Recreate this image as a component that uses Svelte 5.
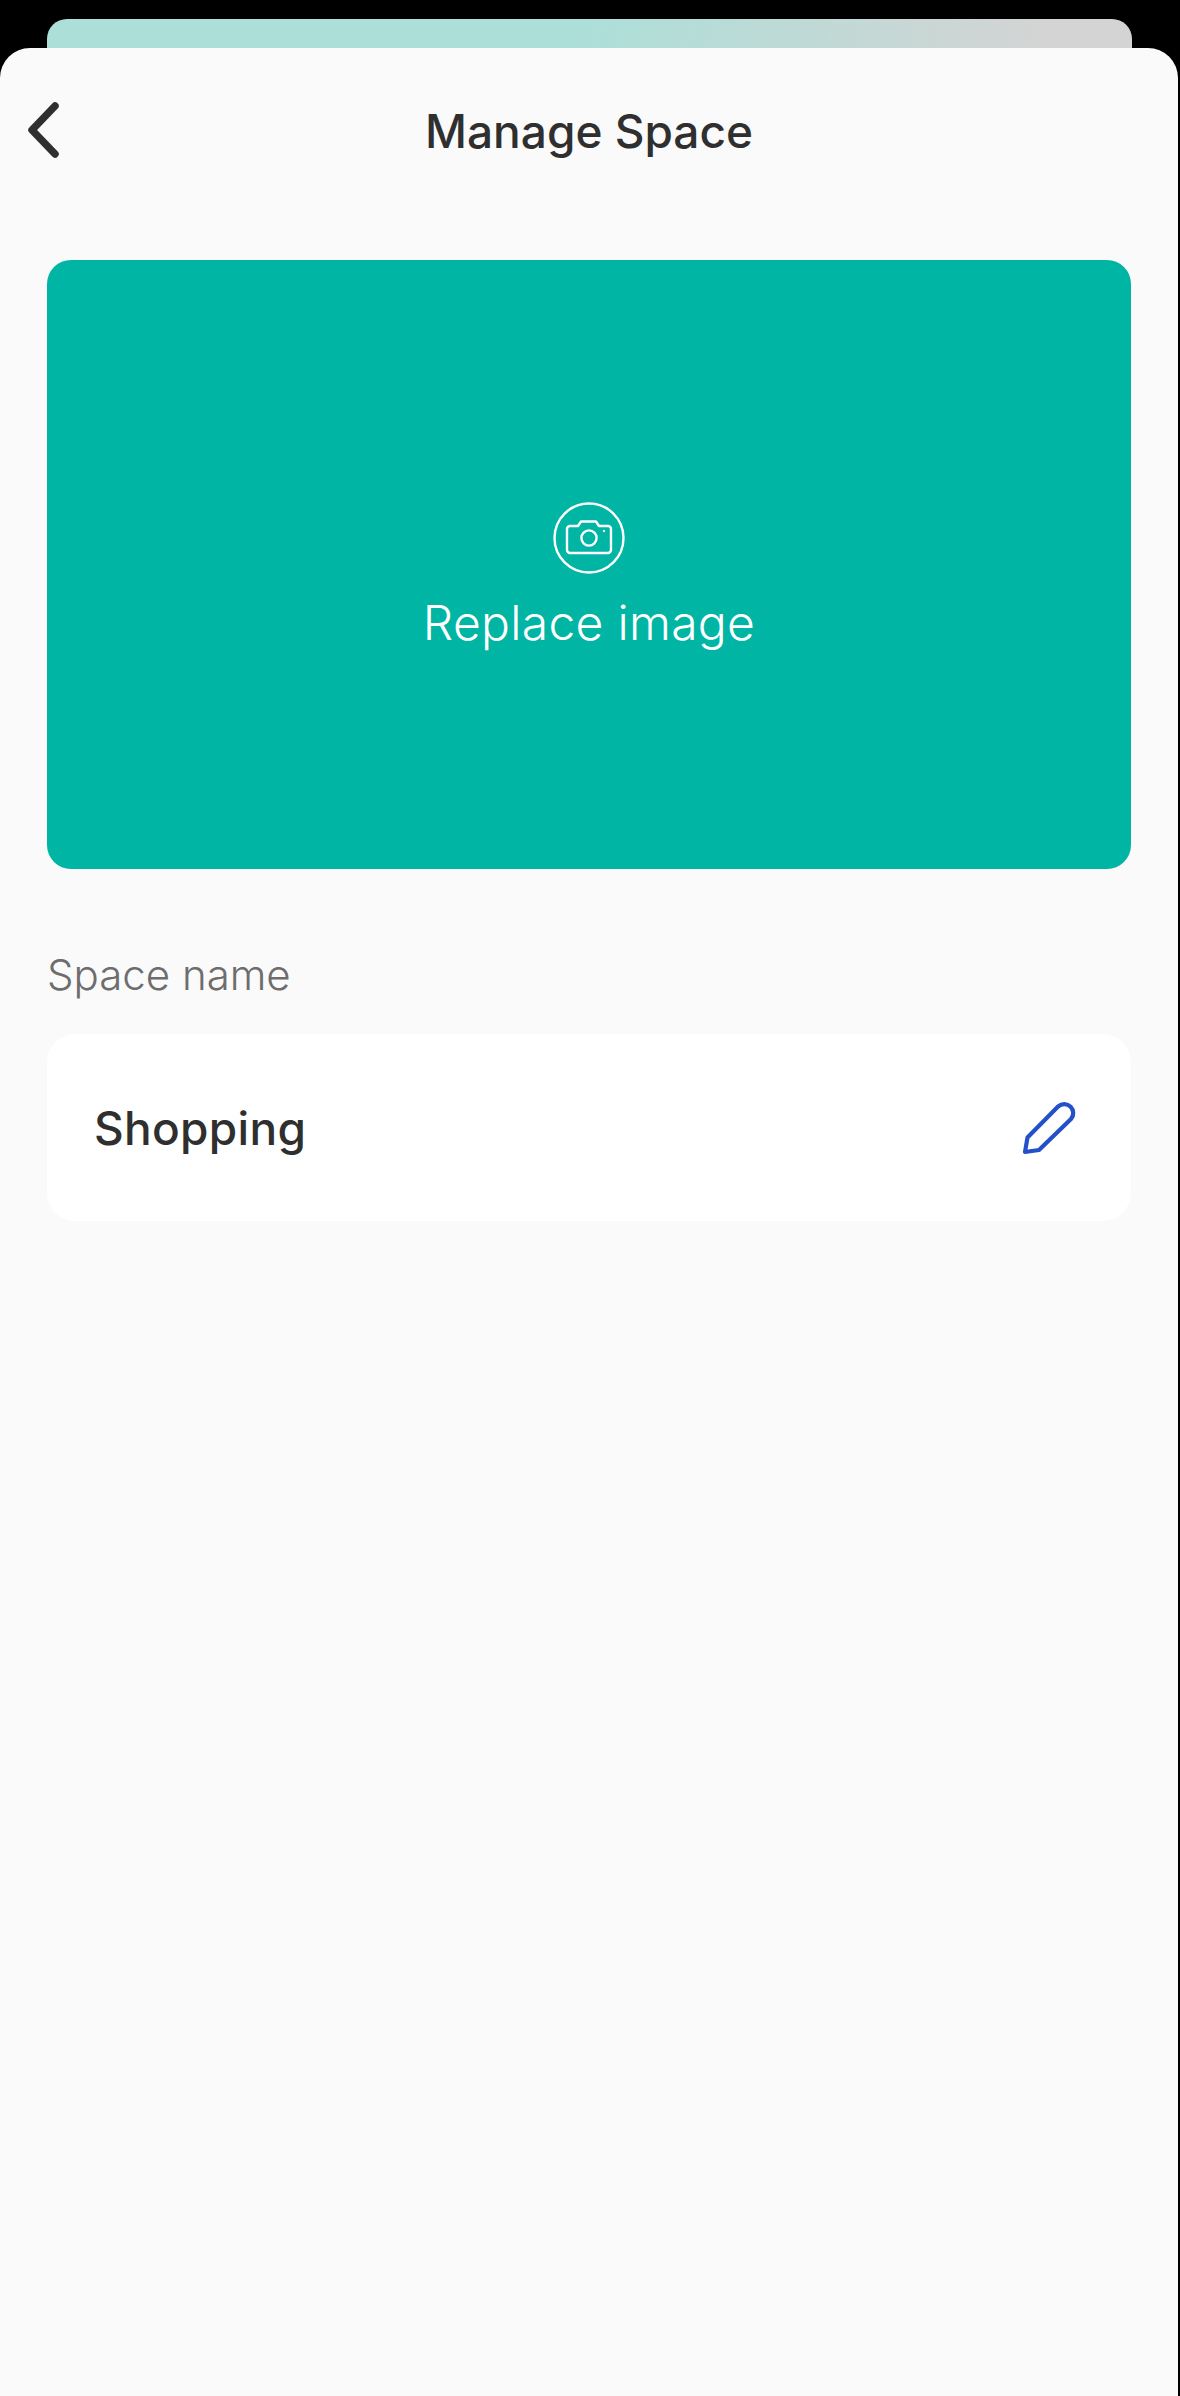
<script lang="ts">
  const spaceName = "Shopping";
</script>

<div class="screen">
  <div class="peek"></div>
  <main class="sheet">
    <header class="topbar">
      <button class="back" aria-label="Back">
        <svg width="34" height="58" viewBox="0 0 34 58" fill="none">
          <path d="M29 5 L6 29 L29 53" stroke="#2f2f2f" stroke-width="7.5" stroke-linecap="round" stroke-linejoin="round" />
        </svg>
      </button>
      <h1>Manage Space</h1>
    </header>

    <section class="cover">
      <svg width="72" height="72" viewBox="0 0 72 72" fill="none" stroke="#fff" stroke-width="2.4">
        <circle cx="36" cy="36" r="34.5" />
        <path d="M14 27 a3 3 0 0 1 3-3 h8 l3-4.5 h15 l3 4.5 h9 a3 3 0 0 1 3 3 v21 a3 3 0 0 1-3 3 h-38 a3 3 0 0 1-3-3 z" stroke-linejoin="round" />
        <circle cx="36" cy="36" r="7.6" />
        <circle cx="51" cy="29" r="0.8" fill="#fff" stroke-width="1" />
      </svg>
      <span class="cover-label">Replace image</span>
    </section>

    <label class="field-label" for="space-name">Space name</label>
    <div class="field" id="space-name">
      <span class="field-value">{spaceName}</span>
      <button class="edit" aria-label="Edit name">
        <svg width="56" height="56" viewBox="0 0 56 56" fill="none">
          <path d="M4 52 L6.5 37.5 L37.3 6.3 A9 9 0 0 1 50 19 L18 50 Z" stroke="#2450c8" stroke-width="4.2" stroke-linejoin="round" />
        </svg>
      </button>
    </div>
  </main>
</div>

<style>
  :global(body) {
    margin: 0;
    background: #000;
  }

  .screen {
    height: 2396px;
    padding-top: 19px;
    box-sizing: border-box;
    font-family: Inter, "Liberation Sans", sans-serif;
    overflow: hidden;
  }

  .peek {
    height: 29px;
    margin: 0 48px 0 47px;
    border-radius: 20px 20px 0 0;
    background: linear-gradient(100deg, #abdfd8 0%, #abdfd8 48%, #d4d4d4 92%);
  }

  .sheet {
    width: 1178px;
    height: 2348px;
    box-sizing: border-box;
    padding: 0 47px;
    background: #fafafa;
    border-radius: 30px 30px 0 0;
  }

  .topbar {
    position: relative;
    height: 212px;
    display: flex;
    justify-content: center;
  }

  .back {
    position: absolute;
    left: -21px;
    top: 53px;
    padding: 0;
    border: 0;
    background: none;
    line-height: 0;
  }

  h1 {
    margin: 57px 0 0;
    font-size: 46px;
    line-height: 52px;
    font-weight: 550;
    color: #2f2f2f;
  }

  .cover {
    height: 609px;
    border-radius: 24px;
    background: #00b5a4;
    display: flex;
    flex-direction: column;
    align-items: center;
    padding-top: 242px;
    box-sizing: border-box;
  }

  .cover-label {
    margin-top: 20px;
    font-size: 48px;
    line-height: 58px;
    font-weight: 300;
    letter-spacing: 0.3px;
    color: #fff;
  }

  .field-label {
    display: block;
    margin-top: 81px;
    font-size: 42px;
    line-height: 50px;
    font-weight: 300;
    color: #6d6d6d;
  }

  .field {
    margin-top: 34px;
    height: 187px;
    box-sizing: border-box;
    padding: 0 54px 0 47px;
    border-radius: 28px;
    background: #fff;
    display: flex;
    align-items: center;
    justify-content: space-between;
  }

  .field-value {
    font-size: 46px;
    font-weight: 550;
    letter-spacing: 0.3px;
    color: #2f2f2f;
  }

  .edit {
    padding: 0;
    border: 0;
    background: none;
    line-height: 0;
  }
</style>
